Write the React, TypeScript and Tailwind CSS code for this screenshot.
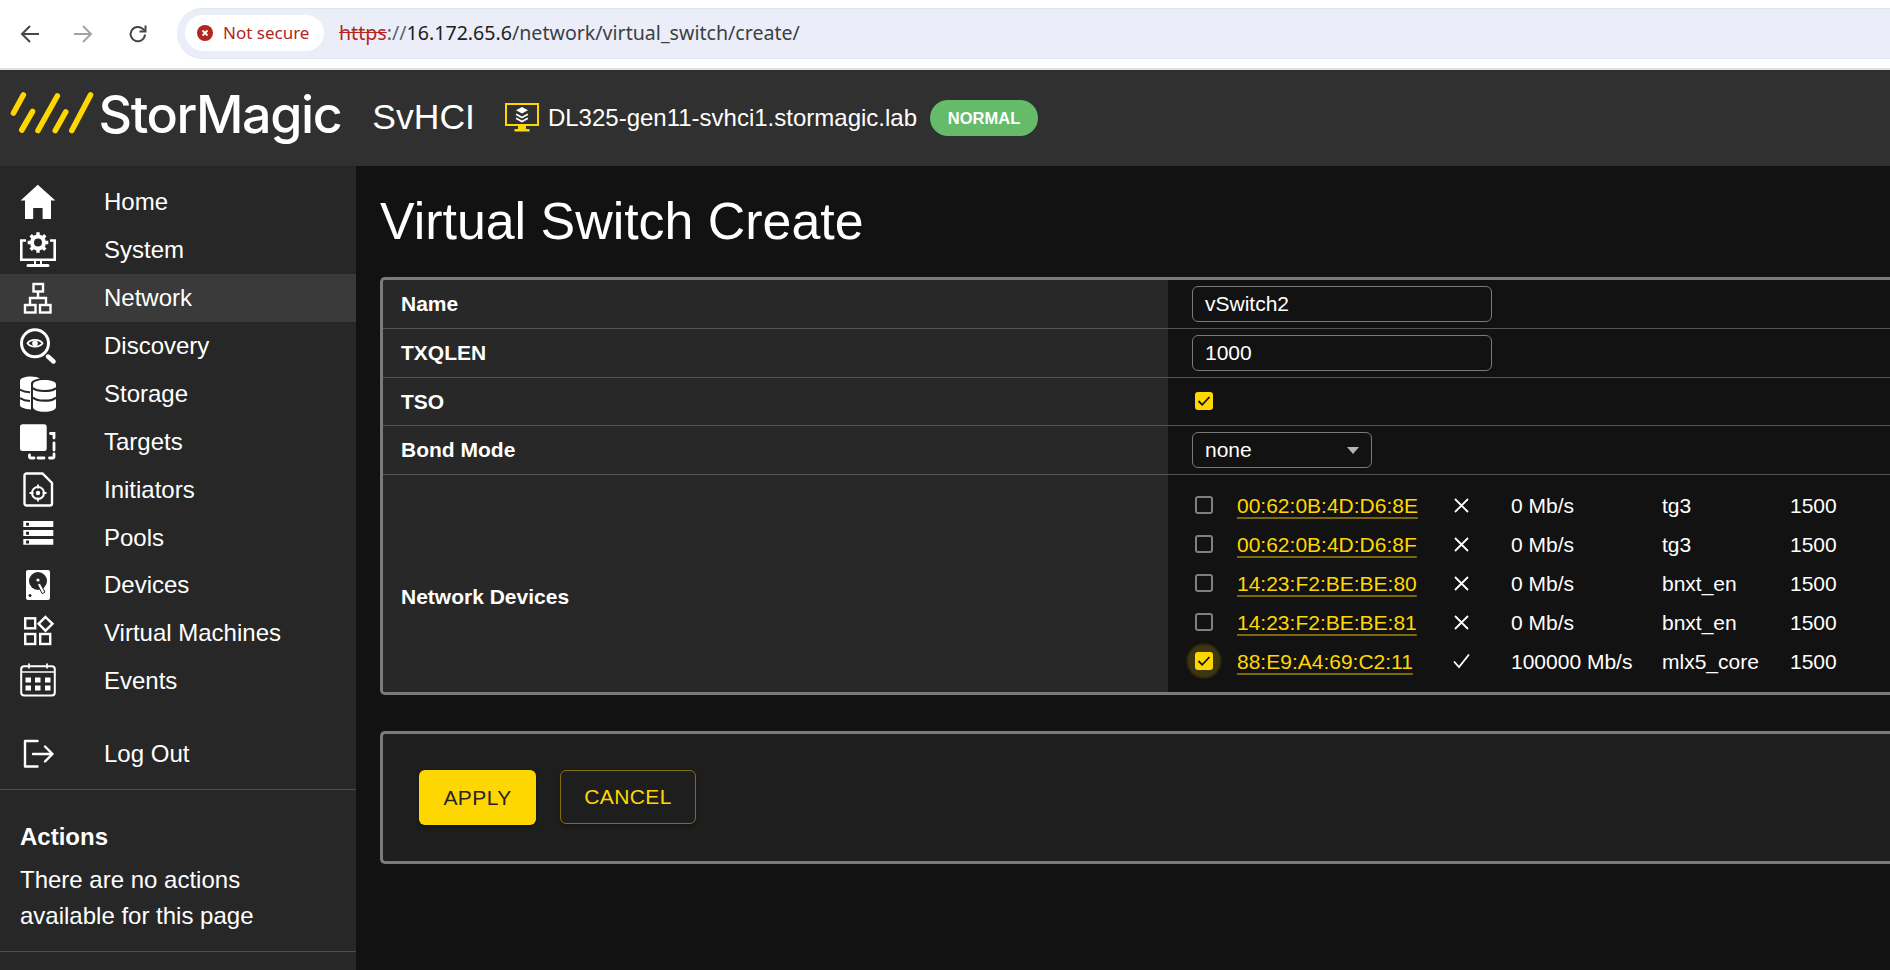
import React from "react";

const Y = "#ffd700";

function ChromeBar() {
  return (
    <div className="h-[70px] bg-white border-b-2 border-[#e0e0e0] flex items-center relative shrink-0">
      <svg width="20" height="20" viewBox="0 0 20 20" className="ml-[20px]" fill="none" stroke="#444746" strokeWidth="2">
        <path d="M19 10H2M10 2l-8 8 8 8" />
      </svg>
      <svg width="20" height="20" viewBox="0 0 20 20" className="ml-[33px]" fill="none" stroke="#a0a3a6" strokeWidth="2">
        <path d="M1 10h17M10 2l8 8-8 8" />
      </svg>
      <svg width="20" height="20" viewBox="0 0 20 20" className="ml-[35px]" fill="none" stroke="#444746" strokeWidth="2">
        <path d="M17 10.5a7.2 7.2 0 1 1-2.2-5.6L17 7" />
        <path d="M17.5 1.5V7.5H11.5" strokeWidth="2" fill="none" />
      </svg>
      <div className="ml-[29px] h-[51px] flex-1 bg-[#ebeef8] rounded-l-[26px] border-y border-[#e2e4ea] flex items-center pl-[8px] mt-[-2px]">
        <div className="h-[36px] w-[139px] bg-white rounded-[18px] flex items-center pl-[12px] gap-[10px]">
          <svg width="16" height="16" viewBox="0 0 16 16">
            <circle cx="8" cy="8" r="8" fill="#b3261e" />
            <path d="M5.5 5.5l5 5M10.5 5.5l-5 5" stroke="#fff" strokeWidth="1.8" />
          </svg>
          <span className="text-[#b3261e] text-[17px] font-['Noto_Sans',sans-serif] whitespace-nowrap">Not secure</span>
        </div>
        <div className="ml-[15px] text-[19.6px] font-['Noto_Sans',sans-serif] text-[#3c4043] whitespace-nowrap">
          <span className="text-[#b3261e] line-through">https</span>
          <span className="text-[#5f6368]">://</span>
          <span className="text-[#202124]">16.172.65.6</span>
          <span>/network/virtual_switch/create/</span>
        </div>
      </div>
    </div>
  );
}

function Logo() {
  return (
    <svg width="96" height="60" viewBox="0 0 96 60" className="shrink-0" fill="none" stroke={Y} strokeWidth="5.6" strokeLinecap="round">
      <path d="M23.3 7 13.5 25" />
      <path d="M32.5 23.500 21.800 42" />
      <path d="M57.3 8 38 42.500" />
      <path d="M65.7 24 55.300 42.500" />
      <path d="M90.500 7 71.800 42.500" />
    </svg>
  );
}

function ServerIcon() {
  return (
    <svg width="36" height="30" viewBox="0 0 36 30" className="shrink-0">
      <rect x="2" y="1" width="32" height="21" fill="none" stroke={Y} strokeWidth="2" />
      <path d="M14 23h8v3h3.5v2.5h-15V26H14z" fill={Y} />
      <path d="M18 4l6 3.2-6 3.2-6-3.2z" fill="#fff" />
      <path d="M12.5 10.5l5.5 3 5.5-3 .8 1.6-6.3 3.4-6.3-3.4z" fill="#fff" />
      <path d="M12.5 14.5l5.5 3 5.5-3 .8 1.6-6.3 3.4-6.3-3.4z" fill="#fff" />
    </svg>
  );
}

function Header() {
  return (
    <div className="h-[96px] bg-[#303030] flex items-center shrink-0">
      <Logo />
      <span className="ml-[2.5px] mb-[6px] text-white font-['Inter',sans-serif] font-medium text-[52px] leading-none tracking-[-1.4px] whitespace-nowrap">StorMagic</span>
      <span className="ml-[31px] text-white text-[35.500px] leading-none whitespace-nowrap">SvHCI</span>
      <div className="ml-[29px] flex items-center">
        <ServerIcon />
        <span className="ml-[8px] text-white text-[24px] whitespace-nowrap">DL325-gen11-svhci1.stormagic.lab</span>
      </div>
      <span className="ml-[13px] h-[36px] w-[108px] rounded-[18px] bg-[#66bb6a] text-white font-bold text-[16.500px] flex items-center justify-center">NORMAL</span>
    </div>
  );
}

const sw = { fill: "none", stroke: "#fff" } as const;

const icons: Record<string, React.ReactNode> = {
  Home: (
    <svg width="36" height="36" viewBox="0 0 36 36">
      <path d="M17.8 .7 35.3 16.5H31V35H22.6V24H13.2V35H5V16.5H.6z" fill="#fff" />
    </svg>
  ),
  System: (
    <svg width="36" height="36" viewBox="0 0 36 36">
      <path d="M6 8.5H1.3V27.7H34.7V8.5H30" {...sw} strokeWidth="2.6" />
      <path d="M8 33.5h20" {...sw} strokeWidth="3" strokeLinecap="round" />
      <path d="M15 28v4M21 28v4" {...sw} strokeWidth="2" />
      <circle cx="18" cy="10.5" r="6" {...sw} strokeWidth="4" />
      <g stroke="#fff" strokeWidth="3.4">
        <path d="M18 .2v3.5M18 17.3v3.5M7.7 10.5h3.5M24.8 10.5h3.5M10.7 3.2l2.5 2.5M22.8 15.3l2.5 2.5M10.7 17.8l2.5-2.5M22.8 5.7l2.5-2.5" />
      </g>
    </svg>
  ),
  Network: (
    <svg width="36" height="36" viewBox="0 0 36 36" {...sw} strokeWidth="2.400">
      <rect x="13.500" y="4" width="9.500" height="7.500" />
      <rect x="5" y="25" width="10.500" height="7.500" />
      <rect x="20" y="25" width="10.500" height="7.500" />
      <path d="M18 11.500V18M10 25V18H26V25" />
    </svg>
  ),
  Discovery: (
    <svg width="36" height="36" viewBox="0 0 36 36">
      <circle cx="15" cy="15.3" r="13.5" {...sw} strokeWidth="3" />
      <path d="M28 28.5 33.5 33.5" {...sw} strokeWidth="4.400" strokeLinecap="round" />
      <path d="M7.500 15.3C10.500 10.800 19.500 10.800 22.500 15.3 19.500 19.800 10.500 19.800 7.500 15.3Z" {...sw} strokeWidth="1.800" />
      <circle cx="15" cy="15.3" r="2.800" fill="#fff" />
    </svg>
  ),
  Storage: (
    <svg width="36" height="36" viewBox="0 0 36 36">
      <path d="M0 5C0 2 5 .5 11 .5c4 0 7 .7 9 2-5 .5-9 2.5-9 5V33.5C5 33 0 31.5 0 29Z" fill="#fff" />
      <path d="M0 13.5C3 15.5 6 16 10 16.3M0 22C3 24 6 24.7 10 25" stroke="#272727" strokeWidth="2" fill="none" />
      <path d="M13 8.5C13 5.5 18 4 24.5 4S36 5.5 36 8.5V31C36 34 31 35.8 24.5 35.8S13 34 13 31Z" fill="#fff" />
      <path d="M13 12C15.5 14.5 20 15 24.5 15S33.5 14.5 36 12M13 21.5C15.5 24 20 24.7 24.5 24.7S33.5 24 36 21.5" stroke="#272727" strokeWidth="2.2" fill="none" />
    </svg>
  ),
  Targets: (
    <svg width="36" height="36" viewBox="0 0 36 36">
      <rect x="0" y=".2" width="26.7" height="26.7" rx="2.5" fill="#fff" />
      <path d="M30.5 9.5h3.5V14M34 19v7M34 30v2.5a1.500 1.500 0 0 1-1.500 1.500H29.500M24 34h-6M14 34H11A1.500 1.500 0 0 1 9.500 32.500V31" {...sw} strokeWidth="2.8" strokeLinecap="round" />
    </svg>
  ),
  Initiators: (
    <svg width="36" height="36" viewBox="0 0 36 36">
      <path d="M6.500 1.500H22.500L32 11V31.500A2 2 0 0 1 30 33.500H6.500A2 2 0 0 1 4.500 31.500V3.500A2 2 0 0 1 6.500 1.500Z" {...sw} strokeWidth="2.4" />
      <circle cx="18" cy="21" r="6" {...sw} strokeWidth="2" />
      <circle cx="18" cy="21" r="2.200" fill="#fff" />
      <path d="M18 12.500v4M18 25.500v4M9.500 21h4M22.500 21h4" {...sw} strokeWidth="1.800" />
    </svg>
  ),
  Pools: (
    <svg width="36" height="36" viewBox="0 0 36 36">
      <path d="M3.300 1h30v6h-30zM3.300 10h30v6h-30zM3.300 19h30v5.700h-30z" fill="#fff" />
      <path d="M6 2.700h3v3h-3zM6 11.700h3v3h-3zM6 20.500h3v3h-3z" fill="#272727" />
    </svg>
  ),
  Devices: (
    <svg width="36" height="36" viewBox="0 0 36 36">
      <rect x="6" y="3" width="24" height="30" rx="2" fill="#fff" />
      <circle cx="18" cy="14" r="9" fill="#272727" />
      <circle cx="18" cy="13" r="1.600" fill="#fff" />
      <path d="M17.500 17.500 20 16l5 9-2.800 1.700z" fill="#fff" stroke="#272727" strokeWidth="1" />
      <circle cx="10" cy="28.500" r="1.500" fill="#272727" />
    </svg>
  ),
  "Virtual Machines": (
    <svg width="36" height="36" viewBox="0 0 36 36" {...sw} strokeWidth="2.400">
      <rect x="5.200" y="3.300" width="10" height="10" />
      <rect x="5.200" y="19" width="10" height="10" />
      <rect x="20.200" y="19" width="10" height="10" />
      <path d="M25.500 2 32.500 8.800 25.500 15.700 18.600 8.800Z" />
    </svg>
  ),
  Events: (
    <svg width="36" height="36" viewBox="0 0 36 36">
      <rect x="1.200" y="3.200" width="33.600" height="29.400" rx="3" {...sw} strokeWidth="2" />
      <path d="M1.200 9h33.600" {...sw} strokeWidth="1.600" />
      <path d="M9 .5v5M27 .5v5" {...sw} strokeWidth="1.800" />
      <path d="M5.500 14.500h5.500v5H5.500zM15 14.500h5.500v5H15zM25 14.500h5.500v5H25zM5.500 22.500h5.500v5H5.500zM15 22.500h5.500v5H15zM25 22.500h5.500v5H25z" fill="#fff" />
    </svg>
  ),
  "Log Out": (
    <svg width="36" height="36" viewBox="0 0 36 36" {...sw} strokeWidth="2.400" strokeLinecap="round" strokeLinejoin="round">
      <path d="M17.500 5H5V30.500H17.500" />
      <path d="M13 18H32.500M25 10.500 32.500 18 25 25.500" />
    </svg>
  ),
};

function NavItem({ name, active }: { name: string; active?: boolean }) {
  return (
    <div className={`h-[47.950px] flex items-center pl-[20px] ${active ? "bg-[#3a3a3a]" : ""}`}>
      <span className="w-[36px] h-[36px] shrink-0">{icons[name]}</span>
      <span className="ml-[48px] text-white text-[24px] whitespace-nowrap">{name}</span>
    </div>
  );
}

function Sidebar() {
  const items = ["Home", "System", "Network", "Discovery", "Storage", "Targets", "Initiators", "Pools", "Devices", "Virtual Machines", "Events"];
  return (
    <div className="w-[356px] shrink-0 bg-[#272727] pt-3">
      {items.map((n) => (
        <NavItem key={n} name={n} active={n === "Network"} />
      ))}
      <div className="mt-[24.500px]">
        <NavItem name="Log Out" />
      </div>
      <div className="mt-[11px] border-y border-[#4d4d4d] px-[20px] pt-[29px] h-[163px]">
        <div className="text-white font-bold text-[24px] leading-[36px]">Actions</div>
        <div className="text-white text-[24px] leading-[36px] mt-[7px]">
          There are no actions
          <br />
          available for this page
        </div>
      </div>
    </div>
  );
}

function Check({ color = "#121212", sw: w = 1.800 }: { color?: string; sw?: number }) {
  return (
    <svg width="18" height="18" viewBox="0 0 18 18" fill="none" stroke={color} strokeWidth={w}>
      <path d="M3.500 9 7.200 12.800 14.500 5" />
    </svg>
  );
}

function Box({ checked, halo }: { checked?: boolean; halo?: boolean }) {
  return (
    <span className="relative w-[18px] h-[18px] inline-block">
      {halo && <span className="absolute left-[-8px] top-[-8px] w-[34px] h-[34px] rounded-full bg-[#ffd70030] blur-[1px]" />}
      {checked ? (
        <span className="absolute inset-0 bg-[#ffd700] rounded-[3px]">
          <Check />
        </span>
      ) : (
        <span className="absolute inset-0 border-2 border-[#7f7f7f] rounded-[3px]" />
      )}
    </span>
  );
}

function Row({ label, h, last, children }: { label: string; h: string; last?: boolean; children: React.ReactNode }) {
  return (
    <div className={`flex ${h} ${last ? "" : "border-b border-[#555555]"}`}>
      <div className={`w-[785px] shrink-0 bg-[#282828] flex items-center pl-[18px] text-white font-bold text-[21px] ${last ? "pt-[26px]" : ""}`}>{label}</div>
      <div className="flex-1 flex items-center pl-[24px]">{children}</div>
    </div>
  );
}

const devices = [
  { mac: "00:62:0B:4D:D6:8E", up: false, speed: "0 Mb/s", driver: "tg3" },
  { mac: "00:62:0B:4D:D6:8F", up: false, speed: "0 Mb/s", driver: "tg3" },
  { mac: "14:23:F2:BE:BE:80", up: false, speed: "0 Mb/s", driver: "bnxt_en" },
  { mac: "14:23:F2:BE:BE:81", up: false, speed: "0 Mb/s", driver: "bnxt_en" },
  { mac: "88:E9:A4:69:C2:11", up: true, speed: "100000 Mb/s", driver: "mlx5_core" },
];

function Devices() {
  return (
    <div className="pl-[3px]">
      {devices.map((d) => (
        <div key={d.mac} className="h-[39px] grid grid-cols-[42px_216px_58px_151px_128px_60px] items-center text-white text-[21px] whitespace-nowrap">
          <div className="flex items-center mb-[2px]">
            <Box checked={d.up} halo={d.up} />
          </div>
          <div className="text-[#ffd700] underline decoration-[#ffd70070] decoration-2 underline-offset-[4px]">{d.mac}</div>
          <div className="flex items-center mb-[2px]">
            {d.up ? (
              <svg width="18" height="18" viewBox="0 0 18 18" fill="none" stroke="#fff" strokeWidth="1.800">
                <path d="M1 9.500 6 15 16 2.500" />
              </svg>
            ) : (
              <svg width="18" height="18" viewBox="0 0 18 18" fill="none" stroke="#fff" strokeWidth="1.800">
                <path d="M2 3l13 13M15 3 2 16" />
              </svg>
            )}
          </div>
          <div>{d.speed}</div>
          <div>{d.driver}</div>
          <div>1500</div>
        </div>
      ))}
    </div>
  );
}

function Main() {
  return (
    <div className="flex-1 bg-[#121212] pl-6 min-w-0">
      <h1 className="text-white text-[51.900px] leading-[60px] mt-[25px] whitespace-nowrap">Virtual Switch Create</h1>
      <div className="mt-[26px] border-y-[3px] border-l-[3px] border-[#7a7a7a] rounded-l-[5px] overflow-hidden">
        <Row label="Name" h="h-[49px]">
          <div className="w-[300px] h-[36px] border border-[#7a7a7a] rounded-[6px] flex items-center pl-[12px] text-white text-[21px]">vSwitch2</div>
        </Row>
        <Row label="TXQLEN" h="h-[49px]">
          <div className="w-[300px] h-[36px] border border-[#7a7a7a] rounded-[6px] flex items-center pl-[12px] text-white text-[21px]">1000</div>
        </Row>
        <Row label="TSO" h="h-[48px]">
          <span className="ml-[3px] mb-[2px] flex items-center">
            <Box checked />
          </span>
        </Row>
        <Row label="Bond Mode" h="h-[49px]">
          <div className="w-[180px] h-[36px] border border-[#7a7a7a] rounded-[6px] flex items-center justify-between pl-[12px] pr-[12px] text-white text-[21px]">
            <span>none</span>
            <svg width="12" height="7" viewBox="0 0 12 7">
              <path d="M0 0h12L6 7z" fill="#b5b5b5" />
            </svg>
          </div>
        </Row>
        <Row label="Network Devices" h="h-[217px]" last>
          <Devices />
        </Row>
      </div>
      <div className="mt-[36px] h-[133px] bg-[#1e1e1e] border-y-[3px] border-l-[3px] border-[#7a7a7a] rounded-l-[5px] flex items-start pl-[36px] pt-[36px]">
        <button className="w-[117px] h-[55px] bg-[#ffd700] rounded-[6px] text-[#262626] text-[21px] tracking-[.4px] shadow-[0_2px_4px_rgba(0,0,0,.4)]">APPLY</button>
        <button className="ml-[24px] w-[136px] h-[54px] border-[1.500px] border-[#ffd70070] rounded-[6px] text-[#ffd700] text-[21px] tracking-[.4px] shadow-[0_2px_4px_rgba(0,0,0,.3)]">CANCEL</button>
      </div>
    </div>
  );
}

export default function App() {
  return (
    <div className="w-[1890px] h-[970px] overflow-hidden flex flex-col bg-[#121212] font-['Liberation_Sans',Arial,sans-serif]">
      <ChromeBar />
      <Header />
      <div className="flex flex-1 min-h-0">
        <Sidebar />
        <Main />
      </div>
    </div>
  );
}
